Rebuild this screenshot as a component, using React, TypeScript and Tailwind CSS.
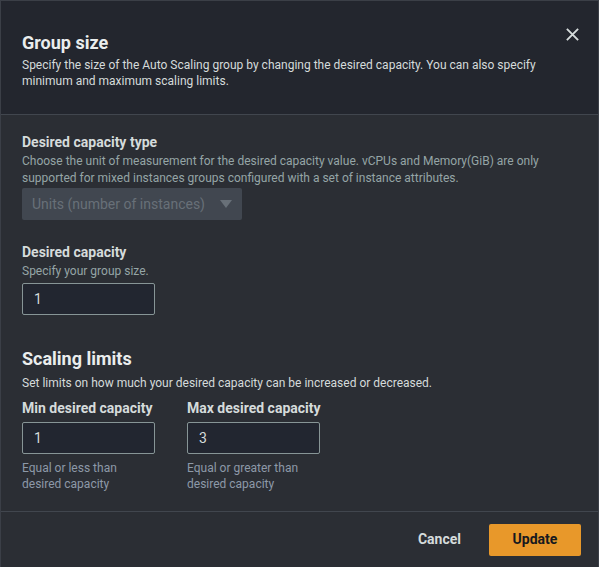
import React from 'react';

const font = { fontFamily: 'Roboto, "Open Sans", sans-serif' };

const Field: React.FC<{ label: string; value: string; hint?: string; help?: string[] }> = ({ label, value, hint, help }) => (
  <div className="flex flex-col">
    <label className="text-[14px] font-bold leading-[20px] text-[#d5dbdb]">{label}</label>
    {hint && <p className="mt-[1px] text-[12px] leading-[16px] text-[#95a5a6]">{hint}</p>}
    <input
      readOnly
      value={value}
      className="mt-[4px] h-[32px] w-[133px] rounded-[2px] border border-[#879596] bg-[#222630] px-[11px] text-[14px] text-[#d5dbdb] outline-none"
    />
    {help && (
      <p className="mt-[6px] text-[12px] leading-[16px] text-[#8d99a8]">
        {help[0]}
        <br />
        {help[1]}
      </p>
    )}
  </div>
);

export default function App() {
  return (
    <div style={font} className="flex h-[567px] w-[599px] flex-col border-x border-t border-[#3b3f47] bg-[#2b2e34]">
      <div className="relative border-b border-[#41464e] bg-[#23262e] px-[21px] pt-[31px] pb-[25px]">
        <h2 className="text-[18px] font-bold leading-[22px] text-[#eaeded]">Group size</h2>
        <p className="mt-[3px] pr-[20px] text-[12px] leading-[16px] text-[#d5dbdb]">
          Specify the size of the Auto Scaling group by changing the desired capacity. You can also specify minimum and maximum scaling limits.
        </p>
        <button className="absolute right-[18px] top-[26px] text-[#d5dbdb]">
          <svg width="15" height="15" viewBox="0 0 16 16" fill="none" stroke="currentColor" strokeWidth="2">
            <path d="M2 2l12 12M14 2L2 14" />
          </svg>
        </button>
      </div>

      <div className="flex flex-1 flex-col px-[21px] pt-[17px]">
        <div className="flex flex-col">
          <label className="text-[14px] font-bold leading-[20px] text-[#d5dbdb]">Desired capacity type</label>
          <p className="mt-[1px] text-[12px] leading-[17px] text-[#95a5a6]">
            Choose the unit of measurement for the desired capacity value. vCPUs and Memory(GiB) are only supported for mixed instances groups configured with a set of instance attributes.
          </p>
          <div className="mt-[1px] flex h-[32px] w-[220px] items-center justify-between rounded-[2px] bg-[#414750] pl-[10px] pr-[10px] text-[14px] text-[#687078]">
            <span>Units (number of instances)</span>
            <svg width="12" height="8" viewBox="0 0 12 8" fill="#687078">
              <path d="M0 0h12L6 8z" />
            </svg>
          </div>
        </div>

        <div className="mt-[22px]">
          <Field label="Desired capacity" hint="Specify your group size." value="1" />
        </div>

        <h3 className="mt-[33px] text-[18px] font-bold leading-[22px] text-[#eaeded]">Scaling limits</h3>
        <p className="mt-[5px] text-[12px] leading-[16px] text-[#d5dbdb]">
          Set limits on how much your desired capacity can be increased or decreased.
        </p>

        <div className="mt-[7px] grid grid-cols-[165px_165px]">
          <Field label="Min desired capacity" value="1" help={['Equal or less than', 'desired capacity']} />
          <Field label="Max desired capacity" value="3" help={['Equal or greater than', 'desired capacity']} />
        </div>
      </div>

      <div className="flex h-[56px] items-center justify-end gap-[28px] border-t border-[#41464e] pr-[17px]">
        <button className="text-[14px] font-bold text-[#d5dbdb]">Cancel</button>
        <button className="h-[32px] w-[92px] rounded-[2px] bg-[#e8982a] text-[14px] font-bold text-[#16191f]">Update</button>
      </div>
    </div>
  );
}
